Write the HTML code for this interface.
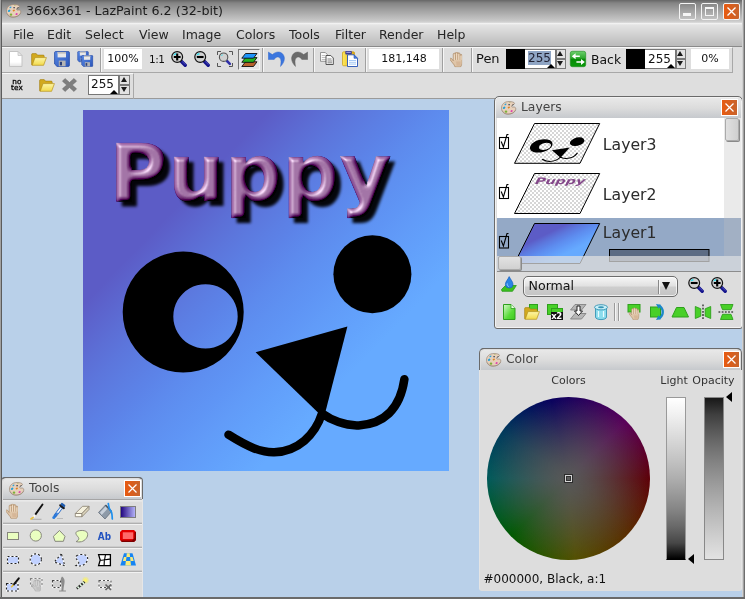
<!DOCTYPE html>
<html><head><meta charset="utf-8"><title>LazPaint</title>
<style>
*{box-sizing:border-box;margin:0;padding:0}
html,body{width:745px;height:599px;overflow:hidden}
body{will-change:transform}
body{position:relative;background:#b9d0e9;font-family:"DejaVu Sans","Liberation Sans",sans-serif;font-size:12px;color:#1a1a1a}
.abs,.abs>*,#menubar span,.ic{position:absolute}
svg{display:block;overflow:visible}
#title{left:0;top:0;width:745px;height:23px;background:linear-gradient(#666 0,#848484 3px,#a4a4a4 11px,#c9c9c9 21px,#dedede 23px)}
#title .t{left:26px;top:3px;font-size:12.7px;color:#1c1c1c;white-space:nowrap}
.wb{top:3px;width:17px;height:17px;border:1.5px solid #f4f4f4;border-radius:2px}
#menubar{left:2px;top:23px;width:740px;height:24px;background:linear-gradient(#f6f6f6 0,#e4e4e4 2px,#d0d0d0 12px,#bcbcbc 22px);border-bottom:1px solid #8a8a8a}
#menubar span{margin-left:1px;top:4px;font-size:12.5px;white-space:nowrap;color:#262626}
#tbbg{left:2px;top:47px;width:740px;height:52px;background:#dedede;border-bottom:1px solid #9a9a9a}
#tb1{left:2px;top:47px;width:731px;height:26px;border-top:1px solid #f8f8f8;border-right:1px solid #a8a8a8;border-bottom:1px solid #a8a8a8}
#tb2{left:2px;top:73px;width:132px;height:26px;border-top:1px solid #f8f8f8;border-right:1px solid #a8a8a8}
.sep{top:48px;width:2px;height:24px;border-left:1px solid #a0a0a0;border-right:1px solid #f6f6f6}
.box{background:#fff;height:20px;top:49px;font-size:11px;text-align:center;line-height:19px;color:#111}
.lbl{font-size:13px;white-space:nowrap;color:#111}
.spin{background:#fff;height:20px;font-size:12px;line-height:18px;color:#111;border:1px solid #777}
.spin .tri{right:0;bottom:0;width:0;height:0;border-left:4px solid transparent;border-right:4px solid transparent;border-bottom:4px solid #000}
.arr{width:10.500px;height:20px}
.arr b{position:absolute;left:0;width:10.500px;height:10px;background:#e2e2e2;border:1px solid #7a7a7a}
.arr b.u{top:0}.arr b.d{top:9.500px;height:10px}
.arr i{position:absolute;left:1.900px;width:0;height:0;border-left:3.300px solid transparent;border-right:3.300px solid transparent}
.arr i.u{top:2.300px;border-bottom:5.800px solid #1a1a1a}
.arr i.d{top:12px;border-top:5.800px solid #1a1a1a}
#lb{left:0;top:0;width:2px;height:599px;background:linear-gradient(90deg,#a2a2a2 0,#a2a2a2 1px,#5c5c5c 1px)}
#rb{left:742px;top:0;width:3px;height:599px;background:linear-gradient(90deg,#d0d0d0 0,#d0d0d0 1px,#a2a2a2 1px,#a2a2a2 2px,#6e6e6e 2px)}
#bb{left:0;top:597px;width:745px;height:2px;background:#6a6a6a}
.win{border:1px solid #6a6a6a;border-radius:5px 5px 3px 3px;background:#dddddd;box-shadow:inset 0 0 0 1px #f2f2f2}
.win .wt{left:1px;top:1px;right:1px;height:20px;background:linear-gradient(#e8e8e8,#dcdcdc 50%,#c6c9cd);border-radius:4px 4px 0 0}
#llist,#llist>*,#combo,#combo>*,.win>svg,.win .wt>*{position:absolute}
.cw{position:absolute;white-space:nowrap;color:#333}
.win .wt span{position:absolute;left:25px;top:2px;font-size:12.3px;color:#444;white-space:nowrap}
.cl{width:17px;height:17px;margin:-1px 0 0 -1px;background:linear-gradient(90deg,#e85a10,#c8642c);border:1px solid #fff}
</style></head><body>
<svg width="0" height="0" style="position:absolute"><defs>
<symbol id="pal" viewBox="0 0 16 14"><path d="M8 .5C3.500 .5 .5 3.300 .5 7.100c0 3.700 2.800 6.100 6.500 6.100 4.200 0 7.800-2.400 7.800-5.400 0-1.700-1.500-2-2.800-1.700-1.200.2-1.700-.6-1.200-1.500.5-.9 2.600-.8 2.700-2.200C13.600 1.300 10.800 .5 8 .5z" fill="#e7d0bb" stroke="#9a8676" stroke-width=".7"/><path d="M1.200 9.500c1 2.300 3.300 3.500 5.800 3.500 3.500 0 6.400-1.600 7.400-3.800" fill="none" stroke="#8a7466" stroke-width=".6" opacity=".7"/><ellipse cx="4.500" cy="3.400" rx="1.100" ry=".7" transform="rotate(-30 4.500 3.400)" fill="#2ba2da"/><ellipse cx="3.100" cy="6.800" rx="1.400" ry="1" transform="rotate(-30 3.100 6.800)" fill="#1f9fd8"/><ellipse cx="7.800" cy="6.500" rx="1.200" ry=".8" transform="rotate(-30 7.800 6.500)" fill="#e08424"/><ellipse cx="5" cy="10.700" rx="1.300" ry="1.100" fill="#7cb038"/><ellipse cx="10.600" cy="10" rx="1.200" ry="1" transform="rotate(-30 10.600 10)" fill="#e040b0"/><ellipse cx="8.900" cy="1.300" rx=".8" ry=".4" fill="#9ab848"/><rect x="7.300" y="3" width="1.700" height="1.300" fill="#5c5c66"/><path d="M10.900 4.400l1.800-.9" stroke="#444" stroke-width=".8"/></symbol>

<linearGradient id="gfold" x1="0" y1="0" x2="0" y2="1"><stop offset="0" stop-color="#fdf6a8"/><stop offset="1" stop-color="#f2d94a"/></linearGradient>
<linearGradient id="gblue" x1="0" y1="0" x2="1" y2="1"><stop offset="0" stop-color="#5a8ae6"/><stop offset="1" stop-color="#2a55b8"/></linearGradient>
<linearGradient id="ggreen" x1="0" y1="0" x2="0" y2="1"><stop offset="0" stop-color="#6ccf6c"/><stop offset=".45" stop-color="#2ea82e"/><stop offset=".5" stop-color="#078a07"/><stop offset="1" stop-color="#0a9a0a"/></linearGradient>
<linearGradient id="gclip" x1="0" y1="0" x2="1" y2="0"><stop offset="0" stop-color="#ffe95a"/><stop offset="1" stop-color="#d9a514"/></linearGradient>
<symbol id="zin" viewBox="0 0 16 16"><path d="M10.500 10.500L14.200 14.200" stroke="#15158c" stroke-width="3.400" stroke-linecap="round"/><path d="M11 10.300L14.400 13.700" stroke="#5a5ad0" stroke-width=".8"/><circle cx="6.200" cy="6" r="5.400" fill="#d2d2d2" stroke="#111" stroke-width="1.200"/><path d="M2.200 4.600A4.400 4.400 0 0 1 5.200 1.800L5.600 3.400z" fill="#30e0f0"/><path d="M6.200 2.600v6.800M2.800 6h6.800" stroke="#000" stroke-width="2.100"/></symbol>
<symbol id="zout" viewBox="0 0 16 16"><path d="M10.500 10.500L14.200 14.200" stroke="#15158c" stroke-width="3.400" stroke-linecap="round"/><path d="M11 10.300L14.400 13.700" stroke="#5a5ad0" stroke-width=".8"/><circle cx="6.200" cy="6" r="5.400" fill="#d2d2d2" stroke="#111" stroke-width="1.200"/><path d="M2.200 4.600A4.400 4.400 0 0 1 5.200 1.800L5.600 3.400z" fill="#30e0f0"/><path d="M2.800 6h6.800" stroke="#000" stroke-width="2.100"/></symbol>
<symbol id="zfit" viewBox="0 0 16 16"><path d="M.5 4V.5H4M12 .5h3.500V4M15.500 12v3.500H12M4 15.500H.5V12" fill="none" stroke="#555" stroke-width="1"/><path d="M9.500 9.500L12.800 12.800" stroke="#3030a8" stroke-width="2.600" stroke-linecap="round"/><circle cx="6.600" cy="6.200" r="4.200" fill="#d0d0d0" stroke="#555" stroke-width="1.100"/><path d="M3.800 5A3 3 0 0 1 5.600 3.300L5.900 4.300z" fill="#30e0f0"/></symbol>
<symbol id="fold" viewBox="0 0 16 13"><path d="M.6 11.800V1.600c0-.6.400-1 1-1h3.600l1.300 1.500h5.700c.6 0 1 .4 1 1v1.700H4.200L1.500 12z" fill="#d2a91e" stroke="#a07c10" stroke-width=".6"/><path d="M1.200 12.300L4 4.600h11.400L12.600 12.300z" fill="url(#gfold)" stroke="#b8941a" stroke-width=".7"/></symbol>
<symbol id="hand" viewBox="0 0 12 15"><path d="M3.200 8.700L1.600 6.500c-.9-1-2.200.1-1.400 1.300L4.100 12.800 5 14.800H10.400c.9-1.500 1.600-2.800 1.600-4.800V3.500a1.100 1.100 0 0 0-2.200 0V1.900a1.100 1.100 0 0 0-2.200 0V1.200a1.100 1.100 0 0 0-2.200 0V2.300a1.100 1.100 0 0 0-2.200 0z" fill="#dfc5a8" stroke="#ad8b66" stroke-width=".7" stroke-linejoin="round"/><path d="M5.400 2.800v5M7.600 2.200v5.600M9.800 3.600v4.200" stroke="#b3906c" stroke-width=".7"/><path d="M4.300 2.500v5.500M6.500 1.500v6.300M8.700 2.200v5.600M10.900 3.800v4" stroke="#f1e0cb" stroke-width=".8"/><path d="M6 9.500h4.500v4H6.500z" fill="#cdaa88" opacity=".55"/></symbol>
<symbol id="floppy" viewBox="0 0 16 16"><path d="M1.600 .6h12.800c.6 0 1 .4 1 1v12.800c0 .6-.4 1-1 1H3L.6 13V1.600c0-.6.400-1 1-1z" fill="url(#gblue)" stroke="#234aa6" stroke-width=".8"/><rect x="3.600" y="1" width="8.400" height="5.400" fill="#e8e8e8"/><rect x="3.600" y="1" width="8.400" height="1.600" fill="#bdbdbd"/><rect x="4.800" y="9.600" width="6.800" height="5.600" fill="#b4b4b4"/><rect x="5.800" y="10.800" width="2.200" height="3.600" fill="#2a3f78"/></symbol>
<symbol id="undo" viewBox="0 0 17 16"><path d="M.3 1V8.500H6.200C7.500 6 10 5.300 11.600 6.700 13.600 8.500 13 12 12.500 15.500 15.500 12.500 17 9 16.200 5.800 15 .8 9-1 4.400 3.600z" fill="#3b76de" stroke="#2d62c8" stroke-width=".4"/></symbol>
</defs></svg>

<div id="title" class="abs"><svg style="left:6px;top:4px" width="16" height="14"><use href="#pal"/></svg><span class="t">366x361 - LazPaint 6.2 (32-bit)</span>
<div class="wb" style="left:679px"><i class="abs" style="left:3px;top:9px;width:8px;height:2.5px;background:#f6f6f6"></i></div>
<div class="wb" style="left:701px"><i class="abs" style="left:3px;top:3px;width:9px;height:9px;border:1px solid #f6f6f6;border-top-width:2px"></i></div>
<div class="wb" style="left:723px;background:linear-gradient(90deg,#e85a10,#c8642c)"><svg width="15" height="15"><path d="M3.500 3.500L11.500 11.500M11.500 3.500L3.500 11.500" stroke="#fff" stroke-width="1.300"/></svg></div>
</div>
<div id="menubar" class="abs">
<span style="left:10px">File</span><span style="left:44px">Edit</span><span style="left:82px">Select</span><span style="left:136px">View</span><span style="left:179px">Image</span><span style="left:233px">Colors</span><span style="left:286px">Tools</span><span style="left:332px">Filter</span><span style="left:376px">Render</span><span style="left:434px">Help</span>
</div>
<div id="tbbg" class="abs"></div>
<div id="tb1" class="abs"></div>
<div id="tb2" class="abs"></div>
<!-- toolbar row 1 -->
<div class="abs sep" style="left:100px"></div>
<div class="abs box" style="left:104px;width:38px">100%</div>
<div class="abs lbl" style="left:149px;top:53px;font-size:10.5px;letter-spacing:-.5px">1:1</div>
<div class="abs" style="left:238px;top:49px;width:22px;height:21px;background:#e6e6e6;border:1px solid #f4f4f4;border-top-color:#777;border-left-color:#777"></div>
<div class="abs sep" style="left:262px"></div>
<div class="abs sep" style="left:313px"></div>
<div class="abs sep" style="left:365px"></div>
<div class="abs box" style="left:369px;width:70px">181,148</div>
<div class="abs sep" style="left:442px"></div>
<div class="abs sep" style="left:471px"></div>
<div class="abs lbl" style="left:476px;top:51px">Pen</div>
<div class="abs" style="left:506px;top:49px;width:20px;height:20px;background:#000"></div>
<div class="abs spin" style="left:525px;top:49px;width:30.500px;border-left:none"><span style="left:3px;top:1px;height:14px;line-height:14px;background:#8fa5c4;color:#223">255</span><i class="tri"></i></div>
<div class="abs arr" style="left:555.500px;top:49px"><b class="u"></b><b class="d"></b><i class="u"></i><i class="d"></i></div>
<div class="abs lbl" style="left:591px;top:51.500px;font-size:12.400px">Back</div>
<div class="abs" style="left:626px;top:49px;width:20px;height:20px;background:#000"></div>
<div class="abs spin" style="left:645px;top:49px;width:30.500px;border-left:none"><span style="left:3px;top:0">255</span><i class="tri"></i></div>
<div class="abs arr" style="left:675.500px;top:49px"><b class="u"></b><b class="d"></b><i class="u"></i><i class="d"></i></div>
<div class="abs box" style="left:691px;width:38px">0%</div>
<!-- toolbar icons -->
<svg class="ic" style="left:9px;top:51px" width="14" height="16" viewBox="0 0 14 16"><defs><linearGradient id="gpage" x1="0" y1="0" x2="0" y2="1"><stop offset="0" stop-color="#fff"/><stop offset=".7" stop-color="#fff"/><stop offset="1" stop-color="#e4e4e4"/></linearGradient></defs><path d="M.5 .5h8.500l4 4v11H.5z" fill="url(#gpage)" stroke="#c4c4c4" stroke-width="1"/><path d="M9 .5v4h4z" fill="#e8e8e8" stroke="#c4c4c4" stroke-width=".8"/></svg>
<svg class="ic" style="left:31px;top:53px" width="16" height="13"><use href="#fold"/></svg>
<svg class="ic" style="left:54px;top:51px" width="16" height="16"><use href="#floppy"/></svg>
<svg class="ic" style="left:77px;top:51px" width="12" height="11.500"><use href="#floppy"/></svg>
<svg class="ic" style="left:81px;top:55px" width="12.500" height="12"><use href="#floppy"/></svg>
<svg class="ic" style="left:171px;top:51px" width="16" height="16"><use href="#zin"/></svg>
<svg class="ic" style="left:193.500px;top:51px" width="16" height="16"><use href="#zout"/></svg>
<svg class="ic" style="left:217px;top:51px" width="16" height="16"><use href="#zfit"/></svg>
<svg class="ic" style="left:241px;top:53px" width="17" height="14" viewBox="0 0 17 14"><path d="M4.500 8.800h11.500l-3.500 4.700H.8z" fill="#b8622c" stroke="#111" stroke-width=".9"/><path d="M4.500 4.600h11.500l-3.500 4.700H.8z" fill="#22b41e" stroke="#111" stroke-width=".9"/><path d="M4.500 .5h11.500l-3.500 4.700H.8z" fill="#1e94fa" stroke="#111" stroke-width=".9"/></svg>
<svg class="ic" style="left:267.500px;top:51px" width="17" height="16"><use href="#undo"/></svg>
<svg class="ic" style="left:290.500px;top:51px;transform:scaleX(-1);filter:grayscale(1) brightness(.95)" width="17" height="16"><use href="#undo"/></svg>
<svg class="ic" style="left:320px;top:52px" width="14" height="13" viewBox="0 0 14 13"><path d="M.5 .5h4.800l2 2v6.800H.5z" fill="#fafafa" stroke="#8a8a8a" stroke-width=".9"/><path d="M1.800 3.500h3.500M1.800 5.500h4M1.800 7.500h4" stroke="#b0b0b0" stroke-width=".8"/><path d="M6 3.500h4.800l2.500 2.500v6.500H6z" fill="#fafafa" stroke="#444" stroke-width=".9"/><path d="M7.500 7h4M7.500 9h4.500M7.500 10.800h4.500" stroke="#777" stroke-width=".9"/></svg>
<svg class="ic" style="left:342px;top:51px" width="16" height="16" viewBox="0 0 16 16"><rect x=".5" y=".8" width="12" height="14" rx="1.200" fill="url(#gclip)" stroke="#c89a10" stroke-width=".7"/><rect x="3.300" y="0" width="6.500" height="3.500" rx=".8" fill="#3a3a96"/><rect x="4.300" y=".8" width="4.500" height="1.200" fill="#9c9cdc"/><path d="M5.500 3.800h6.500l3.500 3.500v8.200h-10z" fill="#fff" stroke="#2451b8" stroke-width=".9"/><path d="M12 3.800v3.500h3.500z" fill="#4a80e0" stroke="#2451b8" stroke-width=".6"/><path d="M7 9.500h7M7 11.300h7M7 13.100h7" stroke="#9cc4f4" stroke-width=".9"/></svg>
<svg class="ic" style="left:450px;top:52px" width="12.200" height="15.200"><use href="#hand"/></svg>
<svg class="ic" style="left:570px;top:51px" width="16" height="16" viewBox="0 0 16 16"><rect x=".3" y=".3" width="15.400" height="15.400" rx="2" fill="url(#ggreen)" stroke="#1c8a1c" stroke-width=".6"/><path d="M1.800 5.200l3.800-3v2.200h4.200v1.600h-4.200v2.200z" fill="#fff"/><path d="M14.800 11l-3.800-3v2.200h-4.600v1.600h4.600v2.200z" fill="#fff"/></svg>
<svg class="ic" style="left:39px;top:79px" width="16" height="13"><use href="#fold"/></svg>
<svg class="ic" style="left:62px;top:78px" width="15" height="14" viewBox="0 0 15 14"><path d="M3 .5L7.500 4.500 12 .5 14.600 3.200 10.300 7l4.300 3.800-2.600 2.700-4.500-4L3 13.500 .4 10.800 4.700 7 .4 3.200z" fill="#7e7e7e" stroke="#666" stroke-width=".5"/></svg>
<!-- toolbar row 2 -->
<div class="abs" style="left:11px;top:78.500px;font-size:7.300px;line-height:6.300px;letter-spacing:.15px;color:#000;-webkit-text-stroke:.3px #000"><span style="position:static;margin-left:1.300px">no</span><br>tex</div>
<div class="abs spin" style="left:88px;top:75px;width:31px"><span style="left:2px;top:-1px">255</span><i class="tri"></i></div>
<div class="abs arr" style="left:119px;top:75px"><b class="u"></b><b class="d"></b><i class="u"></i><i class="d"></i></div>

<!-- canvas -->
<div id="canvas" class="abs" style="left:83px;top:110px;width:366px;height:361px;overflow:hidden">
<svg width="366" height="361" viewBox="0 0 366 361">
<defs>
<linearGradient id="bg" gradientUnits="userSpaceOnUse" x1="97.200" y1="93.200" x2="271.400" y2="260.200"><stop offset="0" stop-color="#5c5cc6"/><stop offset="0.08333" stop-color="#5c65ce"/><stop offset="0.1667" stop-color="#5c6ed5"/><stop offset="0.25" stop-color="#5c76dc"/><stop offset="0.3333" stop-color="#5c7de2"/><stop offset="0.4167" stop-color="#5c83e8"/><stop offset="0.5" stop-color="#5d8aed"/><stop offset="0.5833" stop-color="#5e90f1"/><stop offset="0.6667" stop-color="#5f95f5"/><stop offset="0.75" stop-color="#619bf8"/><stop offset="0.8333" stop-color="#62a0fb"/><stop offset="0.9167" stop-color="#64a5fd"/><stop offset="1" stop-color="#66aaff"/></linearGradient>
<filter id="sh" x="-10%" y="-10%" width="130%" height="140%"><feGaussianBlur stdDeviation="1.600"/></filter>
<filter id="bev" x="-5%" y="-5%" width="110%" height="120%">
<feGaussianBlur in="SourceAlpha" stdDeviation="2.200" result="b"/>
<feDiffuseLighting in="b" surfaceScale="3.500" diffuseConstant="1" lighting-color="#ffffff" result="d"><feDistantLight azimuth="225" elevation="48"/></feDiffuseLighting>
<feComposite in="SourceGraphic" in2="d" operator="arithmetic" k1="1.340" k2="0" k3="0" k4="0" result="lit"/>
<feSpecularLighting in="b" surfaceScale="6" specularConstant="1" specularExponent="9" lighting-color="#ffffff" result="s"><feDistantLight azimuth="225" elevation="20"/></feSpecularLighting>
<feComposite in="s" in2="lit" operator="arithmetic" k1="0" k2=".600" k3="1" k4="-0.080" result="sum"/>
<feComposite in="sum" in2="SourceAlpha" operator="in"/>
</filter>
</defs>
<rect width="366" height="361" fill="url(#bg)"/>
<text x="31.500" y="95.500" font-family="DejaVu Sans, Liberation Sans, sans-serif" font-weight="bold" font-size="80" fill="#000" filter="url(#sh)" opacity=".95">Puppy</text>
<text x="26.300" y="90.500" font-family="DejaVu Sans, Liberation Sans, sans-serif" font-weight="bold" font-size="80" fill="#a06fa3" stroke="#8a5c90" stroke-width=".7" filter="url(#bev)">Puppy</text>
<g id="face"><path fill-rule="evenodd" d="M100.200 141.600a60.500 60.500 0 1 0 .01 0zM122.500 174.200a32.200 32.200 0 1 1-.01 0z" fill="#000"/>
<circle cx="289.400" cy="164.200" r="39" fill="#000"/>
<path d="M172.600 242.200L264.400 216.500L242 303.500L236 303.500z" fill="#000"/>
<path d="M145.500 324.700C165 337 178 342.500 191.200 342.200C215 341.500 232 325 239 303.500C248 310 262 316 275.700 315.400C300 314 317 300 321.400 269.200" fill="none" stroke="#000" stroke-width="8.500" stroke-linecap="round" stroke-linejoin="round"/>
</g>
</svg>
</div>

<!-- Layers window -->
<div class="abs win" id="layers" style="left:494px;top:96px;width:249px;height:233px">
<div class="wt"><svg style="left:4.500px;top:2.500px" width="16" height="14"><use href="#pal"/></svg><span>Layers</span></div>
<div class="cl" style="left:227px;top:3px"><svg width="15" height="15"><path d="M3.500 3.500L11.500 11.500M11.500 3.500L3.500 11.500" stroke="#fff" stroke-width="1.200"/></svg></div>
<div id="llist" style="left:2px;top:21px;width:244px;height:154px;background:#fff;overflow:hidden;border-bottom:1px solid #8c8c8c">
<div style="left:0;top:100px;width:244px;height:60px;background:#94a9c6"></div>
<svg style="left:0;top:0" width="244" height="154" viewBox="497 118 244 154">
<defs><pattern id="chk" width="4" height="4" patternUnits="userSpaceOnUse"><rect width="4" height="4" fill="#fff"/><rect width="2" height="2" fill="#d6d6d6"/><rect x="2" y="2" width="2" height="2" fill="#d6d6d6"/></pattern></defs>
<g id="lay3">
<path d="M534.500 123.500H599.700L580 163.300H514.500z" fill="url(#chk)" stroke="#000" stroke-width="1"/>
<g transform="matrix(.1787 0 -.0554 .1108 534.500 123.500)"><use href="#face"/></g>
</g>
<g id="lay2">
<path d="M534.500 173.500H599.700L580 213.500H514.500z" fill="url(#chk)" stroke="#000" stroke-width="1"/>
<text transform="matrix(.1787 0 -.0554 .1108 534.500 173.500)" x="26" y="98" font-family="DejaVu Sans, Liberation Sans, sans-serif" font-weight="bold" font-size="80" fill="#84488a">Puppy</text>
</g>
<g id="lay1">
<g transform="matrix(.1787 0 -.0554 .1108 534.500 223.500)"><rect width="366" height="361" fill="url(#bg)"/></g>
<path d="M534.500 223.500H599.700L580 263.500H514.500z" fill="none" stroke="#000" stroke-width="1"/>
<rect x="609.500" y="249.500" width="99.500" height="12" fill="#5d6c84" stroke="#000" stroke-width="1"/>
</g>
<g fill="none" stroke="#000" stroke-width="1.100">
<rect x="499.500" y="137.500" width="9" height="11"/><path d="M501.200 141.500l2.200 5.500 3.600-12.500h1.500"/>
<rect x="499.500" y="187.500" width="9" height="11"/><path d="M501.200 191.500l2.200 5.500 3.600-12.500h1.500"/>
<rect x="499.500" y="236.500" width="9" height="11.500"/><path d="M501.200 240.500l2.200 5.500 3.600-12.500h1.500"/>
</g>
<g font-family="DejaVu Sans, Liberation Sans, sans-serif" font-size="15.700" fill="#2c2c2c">
<text x="602.800" y="149.700">Layer3</text><text x="602.800" y="200.300">Layer2</text><text x="602.800" y="237.500">Layer1</text>
</g>
</svg>
<div style="left:227px;top:0;width:17px;height:138px;background:rgba(190,190,190,.33)"></div>
<div style="left:228px;top:0;width:14px;height:23px;background:linear-gradient(90deg,#e0e0e0,#cfcfcf);border:1px solid #aaa;border-radius:2px;box-shadow:1px 1px 0 #8a8a8a"></div>
<div style="left:0;top:138px;width:244px;height:16px;background:rgba(225,225,225,.72)"></div>
<div style="left:1px;top:138px;width:23px;height:14px;background:linear-gradient(#e2e2e2,#d0d0d0);border:1px solid #aaa;border-radius:2px;box-shadow:1px 1px 0 #8a8a8a"></div>
</div>
<!-- blend row -->
<svg style="left:6px;top:179px" width="16" height="17" viewBox="0 0 16 17"><path d="M.5 13.500L4.500 9.500h10.800L11.500 15.300H1z" fill="#3cc020" stroke="#2a9a18" stroke-width=".8"/><path d="M8.200 .6C9.500 3.500 12 5.800 12 8.300a3.800 3.800 0 0 1-7.600 0C4.400 5.800 7 3.500 8.200 .6z" fill="#2a84e4" stroke="#1860c0" stroke-width=".7"/><path d="M6.300 7.500c-.3 1.500.3 2.600 1.500 3" stroke="#9cd0ff" stroke-width="1" fill="none"/></svg>
<div id="combo" style="left:28px;top:178.500px;width:154.500px;height:21px;border:1px solid #6c6c6c;border-radius:5px;background:linear-gradient(#f6f6f6,#e2e2e2 45%,#cdcdcd 55%,#c4c4c4);box-shadow:inset 0 0 0 1px rgba(255,255,255,.7)">
<span style="left:4.500px;top:1.500px;font-size:12.600px;color:#111">Normal</span>
<i style="left:134px;top:3px;width:2px;height:14px;border-left:1px solid #888;border-right:1px solid #f4f4f4"></i>
<i style="left:137.500px;top:5.500px;width:0;height:0;border-left:4.800px solid transparent;border-right:4.800px solid transparent;border-top:8px solid #111"></i>
</div>
<svg style="left:193px;top:180px" width="16" height="16"><use href="#zout"/></svg>
<svg style="left:216px;top:180px" width="16" height="16"><use href="#zin"/></svg>
<!-- layer icons row (origin 495,97) -->
<svg style="left:0;top:205px" width="247" height="20" viewBox="495 302 247 20">
<defs><linearGradient id="gg" x1="0" y1="0" x2="1" y2="1"><stop offset="0" stop-color="#d8f8cc"/><stop offset=".6" stop-color="#58dc38"/><stop offset="1" stop-color="#40c820"/></linearGradient></defs>
<path d="M503.500 304.500h7.500l4 4v11h-11.500z" fill="url(#gg)" stroke="#2ea01c" stroke-width="1"/><path d="M511 304.500v4h4" fill="#eaffe4" stroke="#2ea01c" stroke-width=".8"/>
<rect x="529.500" y="304.500" width="8" height="8" fill="#48d028" stroke="#2ea01c"/><use href="#fold" x="524" y="307" width="16" height="13"/>
<rect x="547.500" y="304.500" width="10" height="10" fill="#48d028" stroke="#2ea01c"/><rect x="551.500" y="308.500" width="11" height="11" fill="#48d028" stroke="#2ea01c"/><rect x="551" y="312" width="12" height="8" fill="#111"/><text x="551.300" y="319.300" font-family="DejaVu Sans, Liberation Sans, sans-serif" font-weight="bold" font-size="8.500" fill="#fff" letter-spacing="-.5">x2</text>
<path d="M575 304.500h11l-4.500 5.500h-11z" fill="#b6b6b6" stroke="#7a7a7a" stroke-width=".8"/><path d="M575 313.500h11l-4.500 5.500h-11z" fill="#b6b6b6" stroke="#7a7a7a" stroke-width=".8"/><path d="M577 306h3v5h2.500l-4 4.500-4-4.500h2.500z" fill="#fff" stroke="#111" stroke-width=".9"/>
<path d="M595.500 307.500v9.500c0 1.600 2.500 2.600 5.500 2.600s5.500-1 5.500-2.600v-9.500z" fill="#8adcec" stroke="#3894b4" stroke-width=".9"/><ellipse cx="601" cy="307.300" rx="6.500" ry="2.600" fill="#c8f0f8" stroke="#3894b4" stroke-width=".9"/><ellipse cx="601" cy="307.200" rx="3" ry="1" fill="#3894b4"/><path d="M598.500 311v6M603.500 311v6" stroke="#e8fcff" stroke-width="1.200"/>
<path d="M614.500 303v18M618.500 303v18" stroke="#9a9a9a" stroke-width="1"/><path d="M615.500 303v18M619.500 303v18" stroke="#f4f4f4" stroke-width="1"/>
<rect x="628" y="304.500" width="12" height="7.500" fill="#48d028" stroke="#2ea01c"/><use href="#hand" x="628.500" y="307.500" width="11" height="12.500"/>
<rect x="650.500" y="307" width="10" height="10" fill="#48d028" stroke="#2ea01c"/><path d="M659 305.500c5 3 5 10 0 13" fill="none" stroke="#1c88c8" stroke-width="2.400"/><path d="M656 304l5 .8-2.500 4z M656 320l5-.8-2.500-4z" fill="#1c88c8"/>
<path d="M676.500 307.500h7.500l4.500 9.500h-16.500z" fill="#48d028" stroke="#2ea01c"/>
<path d="M695.300 306.500l5.500 2.300v7.400l-5.500 2.300z M710.700 306.500l-5.500 2.300v7.400l5.500 2.300z" fill="#48d028" stroke="#2ea01c" stroke-width=".9"/><path d="M703 304.500v16" stroke="#000" stroke-width="1.100" stroke-dasharray="1.800 1.400"/>
<path d="M720.500 304.500h12.500l-2 5.200h-8.500z M720.500 319.500h12.500l-2-5.200h-8.500z" fill="#48d028" stroke="#2ea01c" stroke-width=".9"/><path d="M718.500 312h16" stroke="#000" stroke-width="1.100" stroke-dasharray="1.800 1.400"/>
</svg>
</div>

<!-- Color window -->
<div class="abs win" id="color" style="left:479px;top:348px;width:263px;height:243px;border-color:#6a6a6a #e4e4e4 #dedede #e4e4e4;box-shadow:none">
<i class="cw" style="left:-1px;top:-1px;width:263px;height:22px;border:1px solid #6a6a6a;border-bottom:none;border-radius:5px 5px 0 0"></i>
<div class="wt"><svg style="left:4.500px;top:2.500px" width="16" height="14"><use href="#pal"/></svg><span>Color</span></div>
<div class="cl" style="left:244px;top:3px"><svg width="15" height="15"><path d="M3.500 3.500L11.500 11.500M11.500 3.500L3.500 11.500" stroke="#fff" stroke-width="1.200"/></svg></div>
<span class="cw" style="left:71.29999999999995px;top:25px;font-size:11px">Colors</span>
<span class="cw" style="left:180.29999999999995px;top:25px;font-size:11px">Light</span>
<span class="cw" style="left:212.29999999999995px;top:25px;font-size:11px">Opacity</span>
<div class="cw" style="left:6.600000000000023px;top:47.60000000000002px;width:163.800px;height:163.800px;border-radius:50%;background:radial-gradient(circle closest-side,rgba(87,87,87,1.000) 0%,rgba(87,87,87,0.960) 10%,rgba(87,87,87,0.895) 20%,rgba(87,87,87,0.815) 30%,rgba(87,87,87,0.723) 40%,rgba(87,87,87,0.621) 50%,rgba(87,87,87,0.511) 60%,rgba(87,87,87,0.393) 70%,rgba(87,87,87,0.268) 80%,rgba(87,87,87,0.137) 90%,rgba(87,87,87,0.000) 100%),conic-gradient(from 90deg,#5e0008 0deg,#5a2c00 42deg,#545000 85deg,#005a00 135deg,#005a5a 180deg,#003a5c 215deg,#00125c 242deg,#08005e 258deg,#5a005a 315deg,#5e0008 360deg)"></div>
<div class="cw" style="left:84px;top:125px;width:9px;height:9px;border:1px solid #2c2c2c;box-shadow:inset 0 0 0 1px #d4d4d4,inset 0 0 0 2px #333;background:#5a5a5a"></div>
<div class="cw" style="left:186px;top:48px;width:20px;height:163px;background:linear-gradient(#ffffff 0%,#f1f1f1 10%,#e1e1e1 20%,#d1d1d1 30%,#c0c0c0 40%,#aeaeae 50%,#999999 60%,#838383 70%,#686868 80%,#474747 90%,#000000 100%);border:1px solid #999;border-bottom-color:#000;"></div>
<div class="cw" style="left:224px;top:48px;width:20px;height:163px;background:linear-gradient(#181818 0%,#3e3e3e 10%,#585858 20%,#6f6f6f 30%,#838383 40%,#959595 50%,#a6a6a6 60%,#b6b6b6 70%,#c5c5c5 80%,#d4d4d4 90%,#e2e2e2 100%);border:1px solid #888"></div>
<i class="cw" style="left:208.29999999999995px;top:204.70000000000005px;width:0;height:0;border-top:5.500px solid transparent;border-bottom:5.500px solid transparent;border-right:6.500px solid #000"></i>
<i class="cw" style="left:246.29999999999995px;top:43px;width:0;height:0;border-top:5.500px solid transparent;border-bottom:5.500px solid transparent;border-right:6.500px solid #000"></i>
<span class="cw" style="left:3.5px;top:222.8px;font-size:12px;color:#111">#000000, Black, a:1</span>
</div>

<!-- Tools window -->
<div class="abs win" id="tools" style="left:1px;top:477px;width:141.500px;height:130px;border-color:#6a6a6a #e6e6e6 #dedede #e2e2e2;box-shadow:none">
<i class="cw" style="left:-1px;top:-1px;width:141.500px;height:22px;border:1px solid #6a6a6a;border-bottom:none;border-radius:4px 4px 0 0"></i>
<div class="wt"><svg style="left:5.500px;top:2.500px" width="16" height="14"><use href="#pal"/></svg><span style="left:26px">Tools</span></div>
<div class="cl" style="left:123px;top:3px"><svg width="15" height="15"><path d="M3.500 3.500L11.500 11.500M11.500 3.500L3.500 11.500" stroke="#fff" stroke-width="1.200"/></svg></div>
<svg style="left:1px;top:21px" width="139" height="100" viewBox="3 499 139 100">
<g stroke-width="1"><path d="M3 499.800h139M3 523.300h139M3 547.300h139M3 571.300h139" stroke="#8e8e8e"/><path d="M3 500.800h139M3 524.300h139M3 548.300h139M3 572.300h139" stroke="#f8f8f8"/></g>
<!-- row 1 -->
<use href="#hand" x="6" y="503.800" width="12" height="15"/>
<path d="M31.500 519.300h10" stroke="#a0a0a0" stroke-width=".8"/><path d="M42.500 504.500L35.300 514.600" stroke="#111" stroke-width="1.900" stroke-linecap="round"/><path d="M35.300 514.600L33.200 517.300" stroke="#fafafa" stroke-width="2"/><path d="M33.200 517.300L31 519" stroke="#e8c040" stroke-width="1.600" stroke-linecap="round"/>
<path d="M61.500 507.500L55 516" stroke="#2a6cc8" stroke-width="3.200" stroke-linecap="round"/><path d="M61.300 507.800L56.500 514" stroke="#f4f8fe" stroke-width="1.600"/><path d="M57.500 512.800L55 516" stroke="#2f7fe0" stroke-width="1.600"/><path d="M60.300 505.300l3.500 2.800" stroke="#1a1a1a" stroke-width="2.200" stroke-linecap="round"/><path d="M62 504.200l2 1.600" stroke="#1f5cb0" stroke-width="2.600" stroke-linecap="round"/><circle cx="53.800" cy="517.600" r="1.500" fill="#2a7fe0"/><path d="M57 518.500h6" stroke="#b0b0b0" stroke-width=".8"/>
<path d="M82.500 506.300h6.500L82 513.500h-6.700z" fill="#f4f0dc" stroke="#857c6c" stroke-width=".8"/><path d="M75.300 513.500H82v3.200h-6.700z" fill="#fffdf0" stroke="#857c6c" stroke-width=".8"/><path d="M82 513.500l7-7.200v3.200l-7 7.200z" fill="#ddd5bd" stroke="#857c6c" stroke-width=".8"/>
<path d="M98.500 512.500l7-7.500 6 6.500-6.500 7.500z" fill="#8e9aa8" stroke="#5c6672" stroke-width=".7"/><path d="M100 512.500l5.500-6 2 2.200-5.800 6.300z" fill="#c8d0da"/><path d="M105.500 505l6 6.500" stroke="#4a525c" stroke-width="1.200"/><path d="M108.300 503.500c.6 3 .4 5.500 2.200 7 1.800 1.500 1.500 5 1.800 8.500" fill="none" stroke="#1e90ee" stroke-width="1.700" stroke-linecap="round"/>
<defs><linearGradient id="ggr" x1="0" y1="0" x2="1" y2="0"><stop offset="0" stop-color="#1c007c"/><stop offset="1" stop-color="#b8b8fc"/></linearGradient></defs>
<rect x="120.500" y="506.500" width="15" height="11" fill="url(#ggr)" stroke="#7e7e7e" stroke-width="1"/>
<!-- row 2 -->
<g fill="#eaffc0" stroke="#86867c" stroke-width="1">
<rect x="7.500" y="532.500" width="11" height="7"/><circle cx="35.800" cy="535.500" r="5.600"/><path d="M59.500 530.500l5.500 5.800-1.600 5h-8.400l-1.600-5z"/>
<path id="blob" d="M76.500 531.800c3-2 10-2 11 1.500 1 3.500-2.500 7.500-6 8.400-1.800.4-3.700.4-5.400-.1 2.200-1 3.300-2.500 2.400-4-1.300-2-3.800-3.800-2-5.800z"/>
</g>
<text x="97.800" y="539.700" font-family="DejaVu Sans, Liberation Sans, sans-serif" font-weight="bold" font-size="10.300" textLength="13.200" lengthAdjust="spacingAndGlyphs" fill="#2152c0">Ab</text>
<path d="M122 530h12l2 2v8l-2 2h-12l-2-2v-8z" fill="#e20000"/><path d="M136 532v8l-2 2h-12l-1.500-1.500h11.500l2.500-2.500v-5.500z" fill="#7c0000"/><rect x="122.800" y="532.300" width="10.400" height="6.700" fill="#ff6a6a"/>
<!-- row 3 -->
<g fill="#c2d2ff" stroke="#fff" stroke-width="1.100">
<rect x="7.500" y="556.500" width="11" height="7"/><circle cx="35.800" cy="559.500" r="5.600"/><path d="M61.400 553.800L54.200 562l10.600 3.800z"/><use href="#blob" y="24"/>
</g>
<g fill="none" stroke="#222" stroke-width="1.100" stroke-dasharray="2 2">
<rect x="7.500" y="556.500" width="11" height="7"/><circle cx="35.800" cy="559.500" r="5.600"/><path d="M61.400 553.800L54.200 562l10.600 3.800z"/><use href="#blob" y="24" fill="none" stroke="#222"/>
</g>
<path d="M98.600 554.600h11.800v11h-11.800l1.600-5.500z" fill="#fff" stroke="#000" stroke-width="1.300"/><path d="M105.500 554.600c-.8 3.500-1.500 7-1.400 11M100.200 560c3 1 6.500-1.200 10.200-.8" fill="none" stroke="#000" stroke-width="1.100"/>
<path d="M124 553.300h8.500l3.500 12.200h-15.700z" fill="#1684f2"/><path d="M126.800 553.300h2.900l.4 3.700h-3.700zM124 557h2.500l-.6 4h-3.100zM130.100 557h2.400l1.200 4h-3.200zM125.900 561h4.600l.5 4.500h-5.700z" fill="#f8ea7c"/>
<!-- row 4 -->
<rect x="6.500" y="583.500" width="11.500" height="7.500" fill="#c2d2ff" stroke="#fff" stroke-width="1.100"/><rect x="6.500" y="583.500" width="11.500" height="7.500" fill="none" stroke="#222" stroke-width="1.100" stroke-dasharray="2 2"/><path d="M18.800 578.300L13.500 584.800" stroke="#111" stroke-width="2" stroke-linecap="round"/><path d="M13.500 584.800L11.200 587.300" stroke="#e8c040" stroke-width="1.500"/>
<g opacity=".55"><rect x="30.500" y="578.500" width="11.500" height="7.500" fill="#cfcfcf" stroke="#fff" stroke-width="1.100"/><rect x="30.500" y="578.500" width="11.500" height="7.500" fill="none" stroke="#333" stroke-width="1.100" stroke-dasharray="2 2"/></g>
<g style="filter:grayscale(1)" opacity=".8"><use href="#hand" x="31.500" y="579.500" width="9.500" height="12"/></g>
<rect x="52.500" y="580.500" width="8" height="7" fill="#cfcfcf" stroke="#fff" stroke-width="1.100"/><rect x="52.500" y="580.500" width="8" height="7" fill="none" stroke="#444" stroke-width="1.100" stroke-dasharray="2 2"/><path d="M62 576.500c1.500 1 2.600 2.600 2.600 4.400 0 3-1 5.500-1.200 9.500h2.500v1.200h-6.800v-1.200h2.300c.4-3 .4-6-.4-8.500-.6-1.800-.2-3.800 1-5.400z" fill="#8c8c8c"/>
<circle cx="85.500" cy="580.300" r="3.200" fill="#f8f060" opacity=".45"/><circle cx="85.500" cy="580.300" r="1.700" fill="#fbf26a"/><path d="M76.800 588.600L84.600 581.800" stroke="#2a2a2a" stroke-width="2.400"/><path d="M76.800 588.600L84.600 581.800" stroke="#e4ffe4" stroke-width="2.400" stroke-dasharray="1.500 1.800" stroke-dashoffset="-1.200"/>
<rect x="99" y="580.500" width="12" height="7" fill="#d2d2d2" stroke="#fff" stroke-width="1.100"/><rect x="99" y="580.500" width="12" height="7" fill="none" stroke="#555" stroke-width="1.100" stroke-dasharray="2 2"/><path d="M105.500 584.500l5.500 5.500M111 584.500l-5.500 5.500" stroke="#666" stroke-width="1.700"/>
</svg>
</div>

<div id="lb" class="abs"></div>
<div id="rb" class="abs"></div>
<div id="bb" class="abs"></div>
</body></html>
